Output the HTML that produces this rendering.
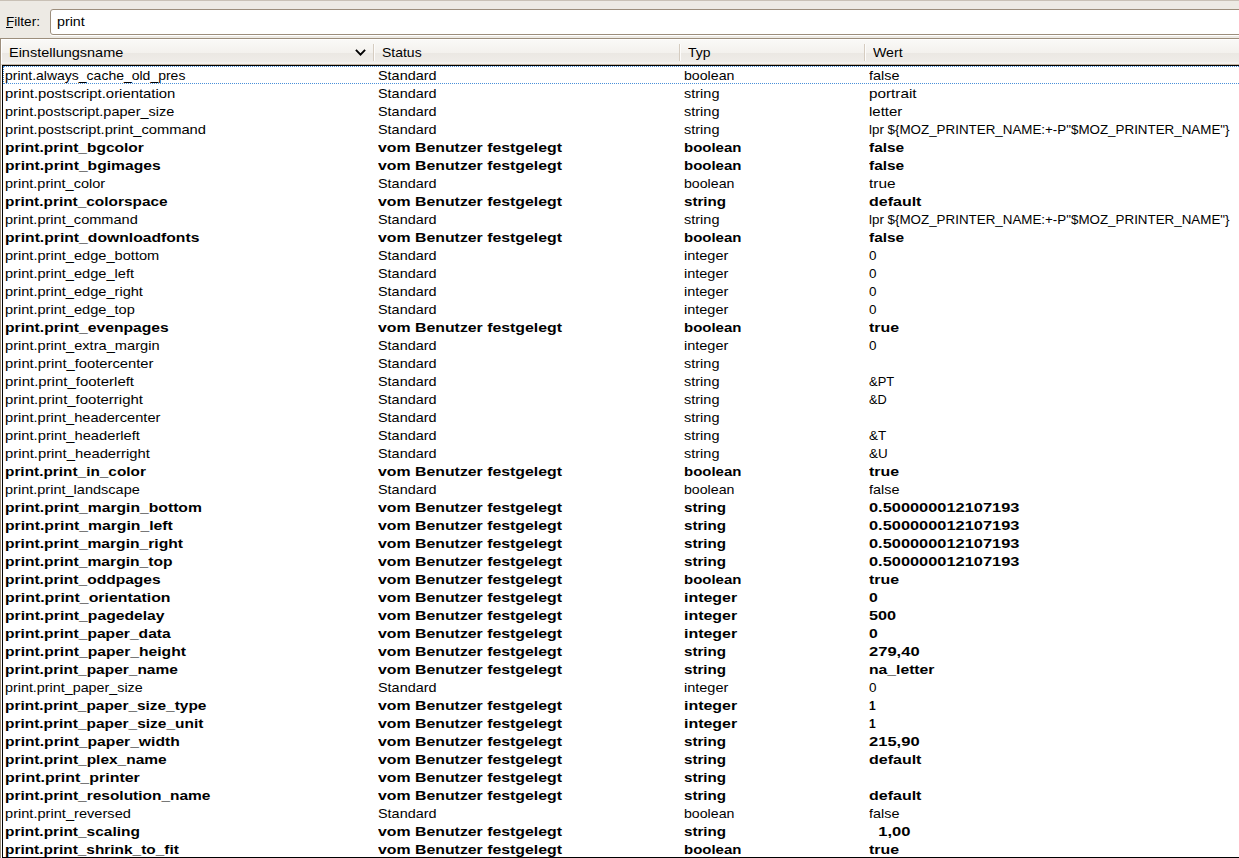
<!DOCTYPE html><html><head><meta charset="utf-8"><style>*{margin:0;padding:0;box-sizing:border-box}
html,body{width:1239px;height:858px;overflow:hidden;background:#edeae4;font-family:"Liberation Sans",sans-serif;color:#000;position:relative}
.t,.ht{display:inline-block;position:absolute;transform-origin:0 0;white-space:pre}
.top{position:absolute;left:0;top:0;width:1239px;height:1px;background:#c9c1b6}
.flabel{position:absolute;left:0;top:0;width:50px;height:36px;font-size:13.5px;line-height:18px}
.flabel .t{left:6px;top:13px}
.ul{position:absolute;left:6px;top:27px;width:7px;height:1px;background:#000}
.fbox{position:absolute;left:50px;top:9px;width:1200px;height:26px;background:#fff;border:1px solid #9c8e7c;border-radius:3px;box-shadow:0 1px 0 #fff;font-size:13.5px;line-height:18px}
.fbox .t{left:6px;top:3px}
.frame{position:absolute;left:0;top:38px;width:1250px;height:830px;border-top:1px solid #9c8e7c;border-left:1px solid #9c8e7c;background:#fff}
.hdr{position:absolute;left:0;top:0;width:1250px;height:26px;background:linear-gradient(#faf9f7 0,#f3f1ed 54%,#ebe8e3 54%,#efece8 92%,#f4f2ef 92%);border-top:1px solid #fff;border-left:1px solid #fff;border-bottom:1px solid #c2b6a6;font-size:13.5px;line-height:18px}
.ht{top:4px}
.chev{position:absolute;left:351px;top:7px}
.sep{position:absolute;top:4px;width:1px;height:17px;background:#d5ccc0;box-shadow:1px 0 0 #fdfcfb}
.body{position:absolute;left:1px;top:26px;width:1250px;height:793px;background:#fff;border-top:1px solid #000;border-left:1px solid #000;border-bottom:1px solid #000}
.r{position:absolute;left:0;width:1250px;height:18px;font-size:13.5px;line-height:18px;white-space:nowrap}
.r .t{top:1px}
.c1{left:2px}.c2{left:375px}.c3{left:681px}.c4{left:866px}
.b{font-weight:bold}
.f{outline:1px dotted #4a90d9;outline-offset:-1px}
</style></head><body>
<div class="top"></div>
<div class="flabel"><span class="t" style="transform:scaleX(1.0064);">Filter:</span><i class="ul"></i></div>
<div class="fbox"><span class="t" style="transform:scaleX(1.0579);">print</span></div>
<div class="frame"><div class="hdr"><span class="ht" style="left:7px;transform:scaleX(1.0724);">Einstellungsname</span><svg class="chev" width="16" height="12" viewBox="0 0 16 12"><path d="M2.9 2.9 L7.5 7.6 L12.1 2.9" fill="none" stroke="#000" stroke-width="1.9"/></svg><div class="sep" style="left:371px"></div><span class="ht" style="left:380px;transform:scaleX(1.0353);">Status</span><div class="sep" style="left:677px"></div><span class="ht" style="left:686px;transform:scaleX(1.0321);">Typ</span><div class="sep" style="left:862px"></div><span class="ht" style="left:871px;transform:scaleX(1.0494);">Wert</span></div><div class="body">
<div class="r f" style="top:0px"><span class="t c1" style="transform:scaleX(1.0360);">print.always_cache_old_pres</span><span class="t c2" style="transform:scaleX(1.0678);">Standard</span><span class="t c3" style="transform:scaleX(1.0486);">boolean</span><span class="t c4" style="transform:scaleX(1.0679);">false</span></div>
<div class="r" style="top:18px"><span class="t c1" style="transform:scaleX(1.1019);">print.postscript.orientation</span><span class="t c2" style="transform:scaleX(1.0678);">Standard</span><span class="t c3" style="transform:scaleX(1.0736);">string</span><span class="t c4" style="transform:scaleX(1.1323);">portrait</span></div>
<div class="r" style="top:36px"><span class="t c1" style="transform:scaleX(1.0746);">print.postscript.paper_size</span><span class="t c2" style="transform:scaleX(1.0678);">Standard</span><span class="t c3" style="transform:scaleX(1.0736);">string</span><span class="t c4" style="transform:scaleX(1.1108);">letter</span></div>
<div class="r" style="top:54px"><span class="t c1" style="transform:scaleX(1.0885);">print.postscript.print_command</span><span class="t c2" style="transform:scaleX(1.0678);">Standard</span><span class="t c3" style="transform:scaleX(1.0736);">string</span><span class="t c4" style="transform:scaleX(0.9903);">lpr ${MOZ_PRINTER_NAME:+-P&quot;$MOZ_PRINTER_NAME&quot;}</span></div>
<div class="r b" style="top:72px"><span class="t c1" style="transform:scaleX(1.1502);">print.print_bgcolor</span><span class="t c2" style="transform:scaleX(1.1738);">vom Benutzer festgelegt</span><span class="t c3" style="transform:scaleX(1.1090);">boolean</span><span class="t c4" style="transform:scaleX(1.1419);">false</span></div>
<div class="r b" style="top:90px"><span class="t c1" style="transform:scaleX(1.1591);">print.print_bgimages</span><span class="t c2" style="transform:scaleX(1.1738);">vom Benutzer festgelegt</span><span class="t c3" style="transform:scaleX(1.1090);">boolean</span><span class="t c4" style="transform:scaleX(1.1419);">false</span></div>
<div class="r" style="top:108px"><span class="t c1" style="transform:scaleX(1.0762);">print.print_color</span><span class="t c2" style="transform:scaleX(1.0678);">Standard</span><span class="t c3" style="transform:scaleX(1.0486);">boolean</span><span class="t c4" style="transform:scaleX(1.1392);">true</span></div>
<div class="r b" style="top:126px"><span class="t c1" style="transform:scaleX(1.1411);">print.print_colorspace</span><span class="t c2" style="transform:scaleX(1.1738);">vom Benutzer festgelegt</span><span class="t c3" style="transform:scaleX(1.1226);">string</span><span class="t c4" style="transform:scaleX(1.1851);">default</span></div>
<div class="r" style="top:144px"><span class="t c1" style="transform:scaleX(1.0793);">print.print_command</span><span class="t c2" style="transform:scaleX(1.0678);">Standard</span><span class="t c3" style="transform:scaleX(1.0736);">string</span><span class="t c4" style="transform:scaleX(0.9903);">lpr ${MOZ_PRINTER_NAME:+-P&quot;$MOZ_PRINTER_NAME&quot;}</span></div>
<div class="r b" style="top:162px"><span class="t c1" style="transform:scaleX(1.1624);">print.print_downloadfonts</span><span class="t c2" style="transform:scaleX(1.1738);">vom Benutzer festgelegt</span><span class="t c3" style="transform:scaleX(1.1090);">boolean</span><span class="t c4" style="transform:scaleX(1.1419);">false</span></div>
<div class="r" style="top:180px"><span class="t c1" style="transform:scaleX(1.0817);">print.print_edge_bottom</span><span class="t c2" style="transform:scaleX(1.0678);">Standard</span><span class="t c3" style="transform:scaleX(1.0738);">integer</span><span class="t c4" style="transform:scaleX(0.9970);">0</span></div>
<div class="r" style="top:198px"><span class="t c1" style="transform:scaleX(1.0813);">print.print_edge_left</span><span class="t c2" style="transform:scaleX(1.0678);">Standard</span><span class="t c3" style="transform:scaleX(1.0738);">integer</span><span class="t c4" style="transform:scaleX(0.9970);">0</span></div>
<div class="r" style="top:216px"><span class="t c1" style="transform:scaleX(1.0810);">print.print_edge_right</span><span class="t c2" style="transform:scaleX(1.0678);">Standard</span><span class="t c3" style="transform:scaleX(1.0738);">integer</span><span class="t c4" style="transform:scaleX(0.9970);">0</span></div>
<div class="r" style="top:234px"><span class="t c1" style="transform:scaleX(1.0813);">print.print_edge_top</span><span class="t c2" style="transform:scaleX(1.0678);">Standard</span><span class="t c3" style="transform:scaleX(1.0738);">integer</span><span class="t c4" style="transform:scaleX(0.9970);">0</span></div>
<div class="r b" style="top:252px"><span class="t c1" style="transform:scaleX(1.1614);">print.print_evenpages</span><span class="t c2" style="transform:scaleX(1.1738);">vom Benutzer festgelegt</span><span class="t c3" style="transform:scaleX(1.1090);">boolean</span><span class="t c4" style="transform:scaleX(1.1771);">true</span></div>
<div class="r" style="top:270px"><span class="t c1" style="transform:scaleX(1.0839);">print.print_extra_margin</span><span class="t c2" style="transform:scaleX(1.0678);">Standard</span><span class="t c3" style="transform:scaleX(1.0738);">integer</span><span class="t c4" style="transform:scaleX(0.9970);">0</span></div>
<div class="r" style="top:288px"><span class="t c1" style="transform:scaleX(1.0933);">print.print_footercenter</span><span class="t c2" style="transform:scaleX(1.0678);">Standard</span><span class="t c3" style="transform:scaleX(1.0736);">string</span></div>
<div class="r" style="top:306px"><span class="t c1" style="transform:scaleX(1.1093);">print.print_footerleft</span><span class="t c2" style="transform:scaleX(1.0678);">Standard</span><span class="t c3" style="transform:scaleX(1.0736);">string</span><span class="t c4" style="transform:scaleX(0.9583);">&amp;PT</span></div>
<div class="r" style="top:324px"><span class="t c1" style="transform:scaleX(1.1071);">print.print_footerright</span><span class="t c2" style="transform:scaleX(1.0678);">Standard</span><span class="t c3" style="transform:scaleX(1.0736);">string</span><span class="t c4" style="transform:scaleX(0.9443);">&amp;D</span></div>
<div class="r" style="top:342px"><span class="t c1" style="transform:scaleX(1.0842);">print.print_headercenter</span><span class="t c2" style="transform:scaleX(1.0678);">Standard</span><span class="t c3" style="transform:scaleX(1.0736);">string</span></div>
<div class="r" style="top:360px"><span class="t c1" style="transform:scaleX(1.0898);">print.print_headerleft</span><span class="t c2" style="transform:scaleX(1.0678);">Standard</span><span class="t c3" style="transform:scaleX(1.0736);">string</span><span class="t c4" style="transform:scaleX(0.9967);">&amp;T</span></div>
<div class="r" style="top:378px"><span class="t c1" style="transform:scaleX(1.0965);">print.print_headerright</span><span class="t c2" style="transform:scaleX(1.0678);">Standard</span><span class="t c3" style="transform:scaleX(1.0736);">string</span><span class="t c4" style="transform:scaleX(0.9968);">&amp;U</span></div>
<div class="r b" style="top:396px"><span class="t c1" style="transform:scaleX(1.1388);">print.print_in_color</span><span class="t c2" style="transform:scaleX(1.1738);">vom Benutzer festgelegt</span><span class="t c3" style="transform:scaleX(1.1090);">boolean</span><span class="t c4" style="transform:scaleX(1.1771);">true</span></div>
<div class="r" style="top:414px"><span class="t c1" style="transform:scaleX(1.0754);">print.print_landscape</span><span class="t c2" style="transform:scaleX(1.0678);">Standard</span><span class="t c3" style="transform:scaleX(1.0486);">boolean</span><span class="t c4" style="transform:scaleX(1.0679);">false</span></div>
<div class="r b" style="top:432px"><span class="t c1" style="transform:scaleX(1.1615);">print.print_margin_bottom</span><span class="t c2" style="transform:scaleX(1.1738);">vom Benutzer festgelegt</span><span class="t c3" style="transform:scaleX(1.1226);">string</span><span class="t c4" style="transform:scaleX(1.2138);">0.500000012107193</span></div>
<div class="r b" style="top:450px"><span class="t c1" style="transform:scaleX(1.1646);">print.print_margin_left</span><span class="t c2" style="transform:scaleX(1.1738);">vom Benutzer festgelegt</span><span class="t c3" style="transform:scaleX(1.1226);">string</span><span class="t c4" style="transform:scaleX(1.2138);">0.500000012107193</span></div>
<div class="r b" style="top:468px"><span class="t c1" style="transform:scaleX(1.1572);">print.print_margin_right</span><span class="t c2" style="transform:scaleX(1.1738);">vom Benutzer festgelegt</span><span class="t c3" style="transform:scaleX(1.1226);">string</span><span class="t c4" style="transform:scaleX(1.2138);">0.500000012107193</span></div>
<div class="r b" style="top:486px"><span class="t c1" style="transform:scaleX(1.1576);">print.print_margin_top</span><span class="t c2" style="transform:scaleX(1.1738);">vom Benutzer festgelegt</span><span class="t c3" style="transform:scaleX(1.1226);">string</span><span class="t c4" style="transform:scaleX(1.2138);">0.500000012107193</span></div>
<div class="r b" style="top:504px"><span class="t c1" style="transform:scaleX(1.1528);">print.print_oddpages</span><span class="t c2" style="transform:scaleX(1.1738);">vom Benutzer festgelegt</span><span class="t c3" style="transform:scaleX(1.1090);">boolean</span><span class="t c4" style="transform:scaleX(1.1771);">true</span></div>
<div class="r b" style="top:522px"><span class="t c1" style="transform:scaleX(1.1740);">print.print_orientation</span><span class="t c2" style="transform:scaleX(1.1738);">vom Benutzer festgelegt</span><span class="t c3" style="transform:scaleX(1.1815);">integer</span><span class="t c4" style="transform:scaleX(1.1657);">0</span></div>
<div class="r b" style="top:540px"><span class="t c1" style="transform:scaleX(1.1624);">print.print_pagedelay</span><span class="t c2" style="transform:scaleX(1.1738);">vom Benutzer festgelegt</span><span class="t c3" style="transform:scaleX(1.1815);">integer</span><span class="t c4" style="transform:scaleX(1.2046);">500</span></div>
<div class="r b" style="top:558px"><span class="t c1" style="transform:scaleX(1.1565);">print.print_paper_data</span><span class="t c2" style="transform:scaleX(1.1738);">vom Benutzer festgelegt</span><span class="t c3" style="transform:scaleX(1.1815);">integer</span><span class="t c4" style="transform:scaleX(1.1657);">0</span></div>
<div class="r b" style="top:576px"><span class="t c1" style="transform:scaleX(1.1600);">print.print_paper_height</span><span class="t c2" style="transform:scaleX(1.1738);">vom Benutzer festgelegt</span><span class="t c3" style="transform:scaleX(1.1226);">string</span><span class="t c4" style="transform:scaleX(1.2255);">279,40</span></div>
<div class="r b" style="top:594px"><span class="t c1" style="transform:scaleX(1.1463);">print.print_paper_name</span><span class="t c2" style="transform:scaleX(1.1738);">vom Benutzer festgelegt</span><span class="t c3" style="transform:scaleX(1.1226);">string</span><span class="t c4" style="transform:scaleX(1.1627);">na_letter</span></div>
<div class="r" style="top:612px"><span class="t c1" style="transform:scaleX(1.0609);">print.print_paper_size</span><span class="t c2" style="transform:scaleX(1.0678);">Standard</span><span class="t c3" style="transform:scaleX(1.0738);">integer</span><span class="t c4" style="transform:scaleX(0.9970);">0</span></div>
<div class="r b" style="top:630px"><span class="t c1" style="transform:scaleX(1.1424);">print.print_paper_size_type</span><span class="t c2" style="transform:scaleX(1.1738);">vom Benutzer festgelegt</span><span class="t c3" style="transform:scaleX(1.1815);">integer</span><span class="t c4" style="transform:scaleX(0.8925);">1</span></div>
<div class="r b" style="top:648px"><span class="t c1" style="transform:scaleX(1.1445);">print.print_paper_size_unit</span><span class="t c2" style="transform:scaleX(1.1738);">vom Benutzer festgelegt</span><span class="t c3" style="transform:scaleX(1.1815);">integer</span><span class="t c4" style="transform:scaleX(0.8925);">1</span></div>
<div class="r b" style="top:666px"><span class="t c1" style="transform:scaleX(1.1589);">print.print_paper_width</span><span class="t c2" style="transform:scaleX(1.1738);">vom Benutzer festgelegt</span><span class="t c3" style="transform:scaleX(1.1226);">string</span><span class="t c4" style="transform:scaleX(1.2255);">215,90</span></div>
<div class="r b" style="top:684px"><span class="t c1" style="transform:scaleX(1.1460);">print.print_plex_name</span><span class="t c2" style="transform:scaleX(1.1738);">vom Benutzer festgelegt</span><span class="t c3" style="transform:scaleX(1.1226);">string</span><span class="t c4" style="transform:scaleX(1.1851);">default</span></div>
<div class="r b" style="top:702px"><span class="t c1" style="transform:scaleX(1.1823);">print.print_printer</span><span class="t c2" style="transform:scaleX(1.1738);">vom Benutzer festgelegt</span><span class="t c3" style="transform:scaleX(1.1226);">string</span></div>
<div class="r b" style="top:720px"><span class="t c1" style="transform:scaleX(1.1462);">print.print_resolution_name</span><span class="t c2" style="transform:scaleX(1.1738);">vom Benutzer festgelegt</span><span class="t c3" style="transform:scaleX(1.1226);">string</span><span class="t c4" style="transform:scaleX(1.1851);">default</span></div>
<div class="r" style="top:738px"><span class="t c1" style="transform:scaleX(1.0825);">print.print_reversed</span><span class="t c2" style="transform:scaleX(1.0678);">Standard</span><span class="t c3" style="transform:scaleX(1.0486);">boolean</span><span class="t c4" style="transform:scaleX(1.0679);">false</span></div>
<div class="r b" style="top:756px"><span class="t c1" style="transform:scaleX(1.1457);">print.print_scaling</span><span class="t c2" style="transform:scaleX(1.1738);">vom Benutzer festgelegt</span><span class="t c3" style="transform:scaleX(1.1226);">string</span><span class="t c4" style="transform:scaleX(1.2272);">&nbsp;&nbsp;1,00</span></div>
<div class="r b" style="top:774px"><span class="t c1" style="transform:scaleX(1.1418);">print.print_shrink_to_fit</span><span class="t c2" style="transform:scaleX(1.1738);">vom Benutzer festgelegt</span><span class="t c3" style="transform:scaleX(1.1090);">boolean</span><span class="t c4" style="transform:scaleX(1.1771);">true</span></div>
</div></div></body></html>
